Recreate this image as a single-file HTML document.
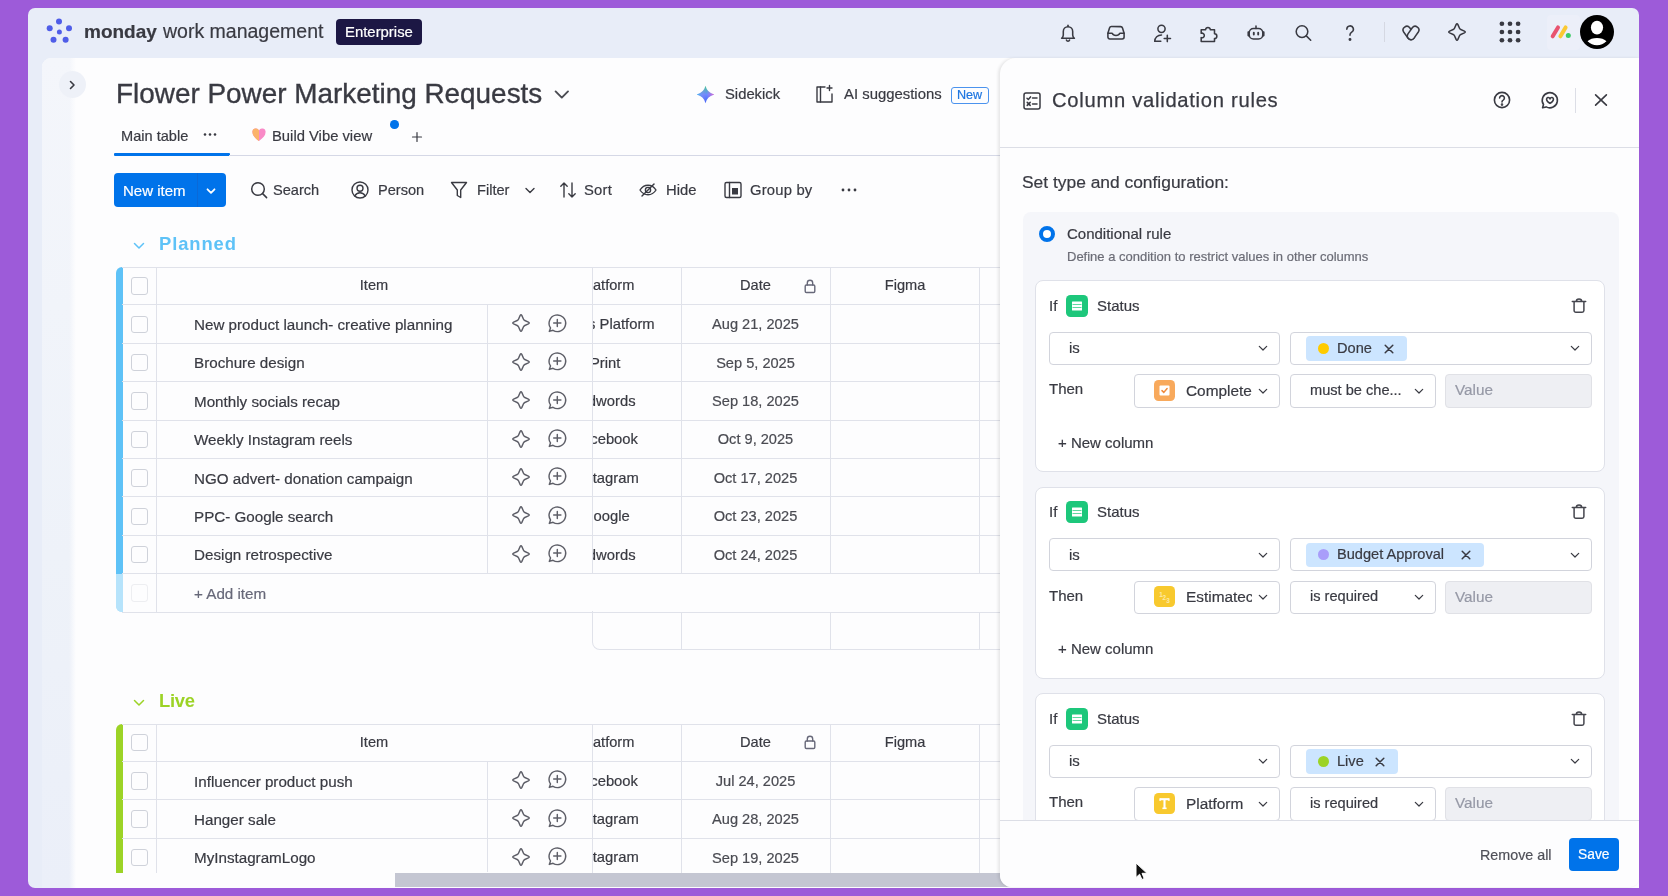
<!DOCTYPE html>
<html><head><meta charset="utf-8">
<style>
*{box-sizing:border-box;margin:0;padding:0}
html,body{width:1668px;height:896px;overflow:hidden}
body{background:#9d5bd9;font-family:"Liberation Sans",sans-serif;color:#393a42;position:relative}
.a{position:absolute}
.t{position:absolute;white-space:nowrap;line-height:1;will-change:transform;-webkit-text-stroke:.2px currentColor}
svg{position:absolute;overflow:visible}
#win{left:28px;top:8px;width:1611px;height:879.5px;border-radius:7px;background:#e8edf8;overflow:hidden}
#main{left:42px;top:57.5px;width:1597px;height:830px;background:#fdfdfe;border-top-left-radius:9px}
#strip{left:42px;top:57.5px;width:34px;height:830px;background:linear-gradient(90deg,rgba(253,253,254,0) 80%,#fdfdfe),linear-gradient(180deg,#f4f6fb,#eef2f9 60%,#ebeff9);border-top-left-radius:9px}
.ico{stroke:#393a42;fill:none;stroke-width:1.6;stroke-linecap:round;stroke-linejoin:round}
</style></head><body>
<div id="win" class="a"></div>
<div id="main" class="a"></div>
<div id="strip" class="a"></div>

<!-- HEADER -->
<svg style="left:44px;top:16px" width="30" height="30" viewBox="0 0 30 30">
  <g fill="#4f5de8">
   <circle cx="15" cy="5.4" r="3"/><circle cx="25" cy="12.2" r="3"/><circle cx="21.6" cy="23.8" r="3"/>
   <circle cx="9.5" cy="23.8" r="3"/><circle cx="5.7" cy="12.2" r="3"/><circle cx="15.4" cy="16" r="2.5"/>
  </g>
</svg>
<div class="t" style="left:84px;top:22px;font-size:19px;font-weight:bold;color:#393a42">monday</div>
<div class="t" style="left:163px;top:21.7px;font-size:19.5px;color:#393a42">work management</div>
<div class="a" style="left:336px;top:19px;width:86px;height:26px;border-radius:4px;background:#1c1744"></div>
<div class="t" style="left:345px;top:25px;font-size:14.9px;color:#fff">Enterprise</div>


<!-- header icons -->
<svg class="ico" style="left:1056.4px;top:20.5px;stroke-width:1.55" width="24" height="24" viewBox="0 0 24 24"><path d="M5.6 17.3c1.1-.8 1.7-1.9 1.7-3.3v-3.6a4.7 4.7 0 0 1 9.4 0V14c0 1.4.6 2.5 1.7 3.3z"/><path d="M12 4.2v1.3"/><path d="M10.4 19.1a1.7 1.7 0 0 0 3.2 0"/></svg>
<svg class="ico" style="left:1103.5px;top:20.5px;stroke-width:1.55" width="24" height="24" viewBox="0 0 24 24"><path d="M3.9 12.2l1.6-5.2a2 2 0 0 1 1.9-1.4h9.2a2 2 0 0 1 1.9 1.4l1.6 5.2v3.9a1.9 1.9 0 0 1-1.9 1.9H5.8a1.9 1.9 0 0 1-1.9-1.9z"/><path d="M3.9 12.2h4.3c.6 1.5 2 2.3 3.8 2.3s3.2-.8 3.8-2.3h4.3"/></svg>
<svg class="ico" style="left:1150px;top:20.5px;stroke-width:1.55" width="24" height="24" viewBox="0 0 24 24"><circle cx="11.5" cy="7.8" r="3.6"/><path d="M4.8 20.3c0-3.8 2.8-6.3 6.7-6.3"/><path d="M4.8 20.3h6"/><path d="M17.3 14.3v6.3M14.2 17.4h6.3"/></svg>
<svg class="ico" style="left:1197px;top:20.5px;stroke-width:1.55" width="24" height="24" viewBox="0 0 24 24"><path d="M4.2 8.8h4.4a2.35 2.35 0 1 1 4.7 0h4.2v4a2.35 2.35 0 1 1 0 4.7v2.9H4.2v-3.8a2.3 2.3 0 1 0 0-4.3z"/></svg>
<svg class="ico" style="left:1244px;top:20.5px;stroke-width:1.55" width="24" height="24" viewBox="0 0 24 24"><rect x="5.2" y="7.5" width="13.6" height="10.5" rx="4.3"/><path d="M12 5v2.5"/><path d="M5.2 11H4.2v3.6h1M18.8 11h1v3.6h-1"/><path d="M9.8 11.8v1.8M14.2 11.8v1.8" stroke-width="1.9"/></svg>
<svg class="ico" style="left:1290.6px;top:20.5px;stroke-width:1.55" width="24" height="24" viewBox="0 0 24 24"><circle cx="11" cy="10.6" r="5.8"/><path d="M15.3 14.9l4.4 4.4"/></svg>
<svg class="ico" style="left:1338px;top:20.5px;stroke-width:1.55" width="24" height="24" viewBox="0 0 24 24"><path d="M8.8 8.2a3.3 3.3 0 1 1 4.9 2.9c-1.1.7-1.7 1.3-1.7 2.6v.6"/><circle cx="12" cy="18.5" r=".7" fill="#393a42"/></svg>
<div class="a" style="left:1384px;top:22px;width:1px;height:20px;background:#d5d8e2"></div>
<svg class="ico" style="left:1398.6px;top:20.5px;stroke-width:1.55" width="24" height="24" viewBox="0 0 24 24"><path d="M4.68 11.03L8.98 17.13A3.7 3.7 0 0 0 15.02 12.87L10.72 6.77A3.7 3.7 0 0 0 4.68 11.03Z"/><path d="M13.28 6.77L8.98 12.87A3.7 3.7 0 0 0 15.02 17.13L19.32 11.03A3.7 3.7 0 0 0 13.28 6.77Z" fill="#e8edf8"/></svg>
<svg class="ico" style="left:1445.3px;top:20.1px;stroke-width:1.55" width="24" height="24" viewBox="0 0 24 24"><g transform="translate(2 2)"><path d="M10.9 2.6L12.5 6.2Q12.9 7.1 13.8 7.5L17.4 9.1Q19.1 10 17.4 10.9L13.8 12.5Q12.9 12.9 12.5 13.8L10.9 17.4Q10 19.1 9.1 17.4L7.5 13.8Q7.1 12.9 6.2 12.5L2.6 10.9Q.9 10 2.6 9.1L6.2 7.5Q7.1 7.1 7.5 6.2L9.1 2.6Q10 .9 10.9 2.6z"/></g></svg>
<svg style="left:1497.8px;top:20px" width="24" height="24" viewBox="0 0 24 24"><g fill="#393a42"><circle cx="3.9" cy="3.75" r="2.35"/><circle cx="12.0" cy="3.75" r="2.35"/><circle cx="20.099999999999998" cy="3.75" r="2.35"/><circle cx="3.9" cy="12.0" r="2.35"/><circle cx="12.0" cy="12.0" r="2.35"/><circle cx="20.099999999999998" cy="12.0" r="2.35"/><circle cx="3.9" cy="20.25" r="2.35"/><circle cx="12.0" cy="20.25" r="2.35"/><circle cx="20.099999999999998" cy="20.25" r="2.35"/></g></svg>
<div class="a" style="left:1546.5px;top:15px;width:33px;height:34.5px;background:#eceff9;border-radius:4px"></div>
<svg style="left:1548px;top:24px" width="24" height="16" viewBox="0 0 24 16"><path d="M4.7 12.3L10 3.4" stroke="#e8536f" stroke-width="4" stroke-linecap="round"/><path d="M12.4 12.3L17.6 3.4" stroke="#fbc933" stroke-width="4" stroke-linecap="round"/><circle cx="20.3" cy="11.5" r="2.5" fill="#3ccb64"/></svg>
<svg style="left:1580.2px;top:14.8px" width="34" height="34" viewBox="0 0 34 34"><defs><clipPath id="avc"><circle cx="17" cy="17" r="13.2"/></clipPath></defs><circle cx="17" cy="17" r="17" fill="#000"/><g clip-path="url(#avc)" fill="#fff"><ellipse cx="17" cy="12.6" rx="6.1" ry="6.8"/><ellipse cx="17" cy="34.6" rx="14" ry="11.6"/></g></svg>

<!-- BOARD HEADER -->
<div class="a" style="left:58.5px;top:71px;width:27px;height:27px;border-radius:50%;background:#eef1f8"></div>
<svg class="ico" style="left:64px;top:76.5px" width="16" height="16" viewBox="0 0 16 16" style="stroke-width:1.5"><path d="M6.5 4.5L10 8l-3.5 3.5"/></svg>
<div class="t" id="title" style="left:116px;top:79.5px;font-size:27.9px;color:#393a42;-webkit-text-stroke:0.35px #393a42">Flower Power Marketing Requests</div>
<svg class="ico" style="left:553px;top:86px;stroke-width:1.9;stroke:#4a4b52" width="18" height="16" viewBox="0 0 18 16"><path d="M2.6 5.4l6.2 6.2 6.2-6.2"/></svg>
<svg style="left:695.5px;top:85px" width="19" height="19" viewBox="0 0 19 19"><defs><linearGradient id="sk1" x1="0" y1="0" x2="0" y2="1"><stop offset="0" stop-color="#3fd08f"/><stop offset=".5" stop-color="#6a8cff"/><stop offset="1" stop-color="#3b62f6"/></linearGradient><linearGradient id="sk2" x1="0" y1="0" x2="1" y2="0"><stop offset="0" stop-color="#35c6e8" stop-opacity=".9"/><stop offset=".55" stop-color="#c56cf0" stop-opacity=".0"/><stop offset="1" stop-color="#f35fc0" stop-opacity=".9"/></linearGradient></defs><path d="M9.5 0.8Q11.2 7.8 18.2 9.5 11.2 11.2 9.5 18.2 7.8 11.2 0.8 9.5 7.8 7.8 9.5 0.8z" fill="url(#sk1)"/><path d="M9.5 0.8Q11.2 7.8 18.2 9.5 11.2 11.2 9.5 18.2 7.8 11.2 0.8 9.5 7.8 7.8 9.5 0.8z" fill="url(#sk2)"/></svg>
<div class="t" style="left:724.5px;top:87px;font-size:14.8px;color:#393a42">Sidekick</div>
<svg class="ico" style="left:814px;top:84px;stroke-width:1.4" width="20" height="20" viewBox="0 0 20 20"><path d="M11 3H3v15h15v-8"/><path d="M6.5 3v15"/><path d="M15.5 1.5v5M13 4h5"/></svg>
<div class="t" style="left:844px;top:87px;font-size:14.9px;color:#393a42">AI suggestions</div>
<div class="a" style="left:951px;top:87px;width:38px;height:17px;border:1.2px solid #4b93ee;border-radius:3px"></div>
<div class="t" style="left:957px;top:89px;font-size:12.6px;color:#1f76e0">New</div>

<!-- tabs -->
<div class="t" style="left:121px;top:128.6px;font-size:14.6px;color:#393a42">Main table</div>
<svg style="left:202px;top:130px" width="16" height="10" viewBox="0 0 16 10"><g fill="#393a42"><circle cx="3" cy="4.5" r="1.3"/><circle cx="8" cy="4.5" r="1.3"/><circle cx="13" cy="4.5" r="1.3"/></g></svg>
<div class="a" style="left:113.5px;top:153px;width:116px;height:2.5px;background:#0073ea;border-radius:1px"></div>
<div class="a" style="left:229px;top:154.6px;width:771px;height:1px;background:#d5d8e6"></div>
<svg style="left:251px;top:127px" width="16" height="15" viewBox="0 0 16 15"><path d="M8 14C4 11 1.5 8.5 1.5 5.5A3.4 3.4 0 0 1 8 3.6 3.4 3.4 0 0 1 14.5 5.5C14.5 8.5 12 11 8 14z" fill="#f98ac7"/><path d="M8 14C4 11 1.5 8.5 1.5 5.5A3.4 3.4 0 0 1 8 3.6z" fill="#fbb36b"/></svg>
<div class="t" style="left:271.5px;top:128.6px;font-size:14.8px;color:#393a42">Build Vibe view</div>
<div class="a" style="left:390px;top:120px;width:8.5px;height:8.5px;border-radius:50%;background:#0073ea"></div>
<svg class="ico" style="left:409.5px;top:130px;stroke-width:1.2" width="14" height="14" viewBox="0 0 14 14"><path d="M7 2.5v9M2.5 7h9"/></svg>

<!-- toolbar -->
<div class="a" style="left:114px;top:173px;width:111.5px;height:34px;border-radius:4px;background:#0073ea"></div>
<div class="a" style="left:196.5px;top:173px;width:1px;height:34px;background:#0a69d8"></div>
<div class="t" style="left:122.5px;top:183px;font-size:15px;color:#fff">New item</div>
<svg style="left:203px;top:183px;stroke:#fff;fill:none;stroke-width:1.8;stroke-linecap:round;stroke-linejoin:round" width="16" height="16" viewBox="0 0 16 16"><path d="M4.5 6.3L8 9.8l3.5-3.5"/></svg>
<svg class="ico" style="left:249px;top:180px;stroke-width:1.5" width="20" height="20" viewBox="0 0 20 20"><circle cx="9" cy="9" r="6.3"/><path d="M13.6 13.6l4 4"/></svg>
<div class="t" style="left:273px;top:183px;font-size:14.6px;color:#393a42">Search</div>
<svg class="ico" style="left:350px;top:180px;stroke-width:1.4" width="20" height="20" viewBox="0 0 20 20"><circle cx="10" cy="10" r="8"/><circle cx="10" cy="8.3" r="3"/><path d="M4.8 16c1.2-2.3 3-3.3 5.2-3.3s4 1 5.2 3.3"/></svg>
<div class="t" style="left:377.5px;top:183px;font-size:14.6px;color:#393a42">Person</div>
<svg class="ico" style="left:449px;top:180px;stroke-width:1.4" width="20" height="20" viewBox="0 0 20 20"><path d="M2.5 2.5h15l-5.8 7.5v7.5l-3.4-2V10z"/></svg>
<div class="t" style="left:476.5px;top:183px;font-size:14.6px;color:#393a42">Filter</div>
<svg class="ico" style="left:522px;top:182px;stroke-width:1.4" width="16" height="16" viewBox="0 0 16 16"><path d="M4 6.5l4 4 4-4"/></svg>
<svg class="ico" style="left:557.5px;top:180px;stroke-width:1.4" width="20" height="20" viewBox="0 0 20 20"><path d="M6 17V3M2.8 6.2L6 3l3.2 3.2M14 3v14M10.8 13.8L14 17l3.2-3.2"/></svg>
<div class="t" style="left:583.8px;top:183px;font-size:14.8px;letter-spacing:.2px;color:#393a42">Sort</div>
<svg class="ico" style="left:638px;top:180px;stroke-width:1.4" width="20" height="20" viewBox="0 0 20 20"><path d="M2 10c2-3.2 4.8-4.8 8-4.8s6 1.6 8 4.8c-2 3.2-4.8 4.8-8 4.8S4 13.2 2 10z"/><circle cx="10" cy="10" r="2.6"/><path d="M4 16L16 4"/></svg>
<div class="t" style="left:665.6px;top:183px;font-size:14.8px;color:#393a42">Hide</div>
<svg class="ico" style="left:722.5px;top:180px;stroke-width:1.4" width="20" height="20" viewBox="0 0 20 20"><rect x="2" y="2.5" width="16" height="15" rx="1.5"/><path d="M6.5 2.5v15"/><rect x="9" y="8" width="6" height="6.5" fill="#393a42" stroke="none"/></svg>
<div class="t" style="left:750px;top:183px;font-size:14.8px;letter-spacing:.2px;color:#393a42">Group by</div>
<svg style="left:840px;top:185px" width="18" height="10" viewBox="0 0 18 10"><g fill="#393a42"><circle cx="3" cy="5" r="1.4"/><circle cx="9" cy="5" r="1.4"/><circle cx="15" cy="5" r="1.4"/></g></svg>

<!-- TABLES -->
<svg style="left:130.5px;top:237.9px;stroke:#5ec2f7;fill:none;stroke-width:1.5;stroke-linecap:round;stroke-linejoin:round" width="16" height="16" viewBox="0 0 16 16"><path d="M3.5 5.5l4.5 4.5 4.5-4.5"/></svg>
<div class="t" style="left:159px;top:234.7px;font-size:18.4px;font-weight:bold;color:#5ec2f7;letter-spacing:0.9px;-webkit-text-stroke:0">Planned</div>
<div class="a" style="left:116px;top:267px;width:6.5px;height:345.0px;background:#5ec2f7;border-radius:6px 0 0 6px"></div>
<div class="a" style="left:116px;top:573.6px;width:6.5px;height:38.4px;background:#fff;opacity:.55;border-radius:0 0 0 6px"></div>
<div class="a" style="left:122px;top:267px;width:878px;height:1px;background:#e0e2ea"></div>
<div class="a" style="left:122px;top:304.3px;width:878px;height:1.2px;background:#e0e2ea"></div>
<div class="a" style="left:122px;top:342.7px;width:878px;height:1.2px;background:#e0e2ea"></div>
<div class="a" style="left:122px;top:381.1px;width:878px;height:1.2px;background:#e0e2ea"></div>
<div class="a" style="left:122px;top:419.5px;width:878px;height:1.2px;background:#e0e2ea"></div>
<div class="a" style="left:122px;top:457.9px;width:878px;height:1.2px;background:#e0e2ea"></div>
<div class="a" style="left:122px;top:496.3px;width:878px;height:1.2px;background:#e0e2ea"></div>
<div class="a" style="left:122px;top:534.7px;width:878px;height:1.2px;background:#e0e2ea"></div>
<div class="a" style="left:122px;top:573.1px;width:878px;height:1.2px;background:#e0e2ea"></div>
<div class="a" style="left:122px;top:611.5px;width:878px;height:1.2px;background:#e0e2ea"></div>
<div class="a" style="left:156px;top:267px;width:1px;height:345.0px;background:#e0e2ea"></div>
<div class="a" style="left:487px;top:304.8px;width:1px;height:268.8px;background:#e0e2ea"></div>
<div class="a" style="left:592px;top:267px;width:1px;height:306.6px;background:#e0e2ea"></div>
<div class="a" style="left:680.5px;top:267px;width:1px;height:306.6px;background:#e0e2ea"></div>
<div class="a" style="left:830px;top:267px;width:1px;height:306.6px;background:#e0e2ea"></div>
<div class="a" style="left:979px;top:267px;width:1px;height:306.6px;background:#e0e2ea"></div>
<div class="a" style="left:130.5px;top:277.4px;width:17.5px;height:17.5px;border:1px solid #cfd2da;border-radius:3px;"></div>
<div class="t" style="left:156px;width:436px;text-align:center;top:278.4px;font-size:14.6px;color:#393a42">Item</div>
<div class="a" style="left:592.5px;top:268px;width:88px;height:36px;overflow:hidden"><div class="t" style="right:46.5px;top:10.399999999999977px;font-size:14.6px;color:#393a42">Platform</div></div>
<div class="t" style="left:681px;width:149px;text-align:center;top:278.4px;font-size:14.6px;color:#393a42">Date</div>
<svg class="ico" style="left:801.5px;top:277.9px;stroke:#676879;stroke-width:1.4" width="16" height="16" viewBox="0 0 16 16"><rect x="3.2" y="7" width="9.6" height="7.5" rx="1.2"/><path d="M5.3 7V5a2.7 2.7 0 0 1 5.4 0v2"/></svg>
<div class="t" style="left:830px;width:150px;text-align:center;top:278.4px;font-size:14.6px;color:#393a42">Figma</div>
<div class="a" style="left:130.5px;top:315.5px;width:17.5px;height:17.5px;border:1px solid #cfd2da;border-radius:3px;"></div>
<div class="t" style="left:194px;top:317.0px;font-size:15.2px;color:#393a42">New product launch- creative planning</div>
<svg class="ico" style="left:510.6px;top:313.3px;stroke:#5e5f68;stroke-width:1.45" width="20" height="20" viewBox="0 0 20 20"><path d="M10.9 2.6L12.5 6.2Q12.9 7.1 13.8 7.5L17.4 9.1Q19.1 10 17.4 10.9L13.8 12.5Q12.9 12.9 12.5 13.8L10.9 17.4Q10 19.1 9.1 17.4L7.5 13.8Q7.1 12.9 6.2 12.5L2.6 10.9Q.9 10 2.6 9.1L6.2 7.5Q7.1 7.1 7.5 6.2L9.1 2.6Q10 .9 10.9 2.6z"/></svg>
<svg class="ico" style="left:547px;top:312.7px;stroke:#5e5f68;stroke-width:1.45" width="20" height="20" viewBox="0 0 20 20"><path d="M2.3 18.4l1.2-3.5A8.3 8.3 0 1 1 6 17.3z"/><path d="M10.3 6.4v7.2M6.7 10h7.2"/></svg>
<div class="a" style="left:592.5px;top:305.8px;width:88px;height:36px;overflow:hidden"><div class="t" style="right:26px;top:11.399999999999977px;font-size:14.8px;color:#393a42">Ads Platform</div></div>
<div class="t" style="left:681px;width:149px;text-align:center;top:317.2px;font-size:14.6px;color:#4a4b52">Aug 21, 2025</div>
<div class="a" style="left:130.5px;top:353.9px;width:17.5px;height:17.5px;border:1px solid #cfd2da;border-radius:3px;"></div>
<div class="t" style="left:194px;top:355.4px;font-size:15.2px;color:#393a42">Brochure design</div>
<svg class="ico" style="left:510.6px;top:351.7px;stroke:#5e5f68;stroke-width:1.45" width="20" height="20" viewBox="0 0 20 20"><path d="M10.9 2.6L12.5 6.2Q12.9 7.1 13.8 7.5L17.4 9.1Q19.1 10 17.4 10.9L13.8 12.5Q12.9 12.9 12.5 13.8L10.9 17.4Q10 19.1 9.1 17.4L7.5 13.8Q7.1 12.9 6.2 12.5L2.6 10.9Q.9 10 2.6 9.1L6.2 7.5Q7.1 7.1 7.5 6.2L9.1 2.6Q10 .9 10.9 2.6z"/></svg>
<svg class="ico" style="left:547px;top:351.09999999999997px;stroke:#5e5f68;stroke-width:1.45" width="20" height="20" viewBox="0 0 20 20"><path d="M2.3 18.4l1.2-3.5A8.3 8.3 0 1 1 6 17.3z"/><path d="M10.3 6.4v7.2M6.7 10h7.2"/></svg>
<div class="a" style="left:592.5px;top:344.2px;width:88px;height:36px;overflow:hidden"><div class="t" style="right:60px;top:11.399999999999977px;font-size:14.8px;color:#393a42">Print</div></div>
<div class="t" style="left:681px;width:149px;text-align:center;top:355.59999999999997px;font-size:14.6px;color:#4a4b52">Sep 5, 2025</div>
<div class="a" style="left:130.5px;top:392.3px;width:17.5px;height:17.5px;border:1px solid #cfd2da;border-radius:3px;"></div>
<div class="t" style="left:194px;top:393.8px;font-size:15.2px;color:#393a42">Monthly socials recap</div>
<svg class="ico" style="left:510.6px;top:390.1px;stroke:#5e5f68;stroke-width:1.45" width="20" height="20" viewBox="0 0 20 20"><path d="M10.9 2.6L12.5 6.2Q12.9 7.1 13.8 7.5L17.4 9.1Q19.1 10 17.4 10.9L13.8 12.5Q12.9 12.9 12.5 13.8L10.9 17.4Q10 19.1 9.1 17.4L7.5 13.8Q7.1 12.9 6.2 12.5L2.6 10.9Q.9 10 2.6 9.1L6.2 7.5Q7.1 7.1 7.5 6.2L9.1 2.6Q10 .9 10.9 2.6z"/></svg>
<svg class="ico" style="left:547px;top:389.5px;stroke:#5e5f68;stroke-width:1.45" width="20" height="20" viewBox="0 0 20 20"><path d="M2.3 18.4l1.2-3.5A8.3 8.3 0 1 1 6 17.3z"/><path d="M10.3 6.4v7.2M6.7 10h7.2"/></svg>
<div class="a" style="left:592.5px;top:382.6px;width:88px;height:36px;overflow:hidden"><div class="t" style="right:45px;top:11.399999999999977px;font-size:14.8px;color:#393a42">Adwords</div></div>
<div class="t" style="left:681px;width:149px;text-align:center;top:394.0px;font-size:14.6px;color:#4a4b52">Sep 18, 2025</div>
<div class="a" style="left:130.5px;top:430.7px;width:17.5px;height:17.5px;border:1px solid #cfd2da;border-radius:3px;"></div>
<div class="t" style="left:194px;top:432.2px;font-size:15.2px;color:#393a42">Weekly Instagram reels</div>
<svg class="ico" style="left:510.6px;top:428.5px;stroke:#5e5f68;stroke-width:1.45" width="20" height="20" viewBox="0 0 20 20"><path d="M10.9 2.6L12.5 6.2Q12.9 7.1 13.8 7.5L17.4 9.1Q19.1 10 17.4 10.9L13.8 12.5Q12.9 12.9 12.5 13.8L10.9 17.4Q10 19.1 9.1 17.4L7.5 13.8Q7.1 12.9 6.2 12.5L2.6 10.9Q.9 10 2.6 9.1L6.2 7.5Q7.1 7.1 7.5 6.2L9.1 2.6Q10 .9 10.9 2.6z"/></svg>
<svg class="ico" style="left:547px;top:427.9px;stroke:#5e5f68;stroke-width:1.45" width="20" height="20" viewBox="0 0 20 20"><path d="M2.3 18.4l1.2-3.5A8.3 8.3 0 1 1 6 17.3z"/><path d="M10.3 6.4v7.2M6.7 10h7.2"/></svg>
<div class="a" style="left:592.5px;top:421.0px;width:88px;height:36px;overflow:hidden"><div class="t" style="right:42.5px;top:11.399999999999977px;font-size:14.8px;color:#393a42">Facebook</div></div>
<div class="t" style="left:681px;width:149px;text-align:center;top:432.4px;font-size:14.6px;color:#4a4b52">Oct 9, 2025</div>
<div class="a" style="left:130.5px;top:469.09999999999997px;width:17.5px;height:17.5px;border:1px solid #cfd2da;border-radius:3px;"></div>
<div class="t" style="left:194px;top:470.59999999999997px;font-size:15.2px;color:#393a42">NGO advert- donation campaign</div>
<svg class="ico" style="left:510.6px;top:466.9px;stroke:#5e5f68;stroke-width:1.45" width="20" height="20" viewBox="0 0 20 20"><path d="M10.9 2.6L12.5 6.2Q12.9 7.1 13.8 7.5L17.4 9.1Q19.1 10 17.4 10.9L13.8 12.5Q12.9 12.9 12.5 13.8L10.9 17.4Q10 19.1 9.1 17.4L7.5 13.8Q7.1 12.9 6.2 12.5L2.6 10.9Q.9 10 2.6 9.1L6.2 7.5Q7.1 7.1 7.5 6.2L9.1 2.6Q10 .9 10.9 2.6z"/></svg>
<svg class="ico" style="left:547px;top:466.29999999999995px;stroke:#5e5f68;stroke-width:1.45" width="20" height="20" viewBox="0 0 20 20"><path d="M2.3 18.4l1.2-3.5A8.3 8.3 0 1 1 6 17.3z"/><path d="M10.3 6.4v7.2M6.7 10h7.2"/></svg>
<div class="a" style="left:592.5px;top:459.4px;width:88px;height:36px;overflow:hidden"><div class="t" style="right:42px;top:11.399999999999977px;font-size:14.8px;color:#393a42">Instagram</div></div>
<div class="t" style="left:681px;width:149px;text-align:center;top:470.79999999999995px;font-size:14.6px;color:#4a4b52">Oct 17, 2025</div>
<div class="a" style="left:130.5px;top:507.5px;width:17.5px;height:17.5px;border:1px solid #cfd2da;border-radius:3px;"></div>
<div class="t" style="left:194px;top:509.0px;font-size:15.2px;color:#393a42">PPC- Google search</div>
<svg class="ico" style="left:510.6px;top:505.29999999999995px;stroke:#5e5f68;stroke-width:1.45" width="20" height="20" viewBox="0 0 20 20"><path d="M10.9 2.6L12.5 6.2Q12.9 7.1 13.8 7.5L17.4 9.1Q19.1 10 17.4 10.9L13.8 12.5Q12.9 12.9 12.5 13.8L10.9 17.4Q10 19.1 9.1 17.4L7.5 13.8Q7.1 12.9 6.2 12.5L2.6 10.9Q.9 10 2.6 9.1L6.2 7.5Q7.1 7.1 7.5 6.2L9.1 2.6Q10 .9 10.9 2.6z"/></svg>
<svg class="ico" style="left:547px;top:504.70000000000005px;stroke:#5e5f68;stroke-width:1.45" width="20" height="20" viewBox="0 0 20 20"><path d="M2.3 18.4l1.2-3.5A8.3 8.3 0 1 1 6 17.3z"/><path d="M10.3 6.4v7.2M6.7 10h7.2"/></svg>
<div class="a" style="left:592.5px;top:497.8px;width:88px;height:36px;overflow:hidden"><div class="t" style="right:51px;top:11.399999999999977px;font-size:14.8px;color:#393a42">Google</div></div>
<div class="t" style="left:681px;width:149px;text-align:center;top:509.2px;font-size:14.6px;color:#4a4b52">Oct 23, 2025</div>
<div class="a" style="left:130.5px;top:545.9000000000001px;width:17.5px;height:17.5px;border:1px solid #cfd2da;border-radius:3px;"></div>
<div class="t" style="left:194px;top:547.4000000000001px;font-size:15.2px;color:#393a42">Design retrospective</div>
<svg class="ico" style="left:510.6px;top:543.7px;stroke:#5e5f68;stroke-width:1.45" width="20" height="20" viewBox="0 0 20 20"><path d="M10.9 2.6L12.5 6.2Q12.9 7.1 13.8 7.5L17.4 9.1Q19.1 10 17.4 10.9L13.8 12.5Q12.9 12.9 12.5 13.8L10.9 17.4Q10 19.1 9.1 17.4L7.5 13.8Q7.1 12.9 6.2 12.5L2.6 10.9Q.9 10 2.6 9.1L6.2 7.5Q7.1 7.1 7.5 6.2L9.1 2.6Q10 .9 10.9 2.6z"/></svg>
<svg class="ico" style="left:547px;top:543.1000000000001px;stroke:#5e5f68;stroke-width:1.45" width="20" height="20" viewBox="0 0 20 20"><path d="M2.3 18.4l1.2-3.5A8.3 8.3 0 1 1 6 17.3z"/><path d="M10.3 6.4v7.2M6.7 10h7.2"/></svg>
<div class="a" style="left:592.5px;top:536.2px;width:88px;height:36px;overflow:hidden"><div class="t" style="right:45px;top:11.400000000000091px;font-size:14.8px;color:#393a42">Adwords</div></div>
<div class="t" style="left:681px;width:149px;text-align:center;top:547.6000000000001px;font-size:14.6px;color:#4a4b52">Oct 24, 2025</div>
<div class="a" style="left:130.5px;top:584.3000000000001px;width:17.5px;height:17.5px;border:1px solid #cfd2da;border-radius:3px;opacity:.35;"></div>
<div class="t" style="left:193.5px;top:585.8000000000001px;font-size:15.2px;color:#676879">+ Add item</div>
<div class="a" style="left:592px;top:611.0px;width:420px;height:39.4px;border:1px solid #e0e2ea;border-top:none;border-radius:0 0 0 8px"></div>
<div class="a" style="left:680.5px;top:612.0px;width:1px;height:38.4px;background:#e0e2ea"></div>
<div class="a" style="left:830px;top:612.0px;width:1px;height:38.4px;background:#e0e2ea"></div>
<div class="a" style="left:979px;top:612.0px;width:1px;height:38.4px;background:#e0e2ea"></div>
<svg style="left:130.5px;top:694.9px;stroke:#9cd326;fill:none;stroke-width:1.5;stroke-linecap:round;stroke-linejoin:round" width="16" height="16" viewBox="0 0 16 16"><path d="M3.5 5.5l4.5 4.5 4.5-4.5"/></svg>
<div class="t" style="left:159px;top:691.7px;font-size:18.4px;font-weight:bold;color:#9cd326;letter-spacing:-0.3px;-webkit-text-stroke:0">Live</div>
<div class="a" style="left:116px;top:723.5px;width:6.5px;height:149.0px;background:#9cd326;border-radius:6px 0 0 0"></div>
<div class="a" style="left:122px;top:723.5px;width:878px;height:1px;background:#e0e2ea"></div>
<div class="a" style="left:122px;top:760.8px;width:878px;height:1.2px;background:#e0e2ea"></div>
<div class="a" style="left:122px;top:799.1999999999999px;width:878px;height:1.2px;background:#e0e2ea"></div>
<div class="a" style="left:122px;top:837.5999999999999px;width:878px;height:1.2px;background:#e0e2ea"></div>
<div class="a" style="left:156px;top:723.5px;width:1px;height:149.0px;background:#e0e2ea"></div>
<div class="a" style="left:487px;top:761.3px;width:1px;height:111.20000000000005px;background:#e0e2ea"></div>
<div class="a" style="left:592px;top:723.5px;width:1px;height:149.0px;background:#e0e2ea"></div>
<div class="a" style="left:680.5px;top:723.5px;width:1px;height:149.0px;background:#e0e2ea"></div>
<div class="a" style="left:830px;top:723.5px;width:1px;height:149.0px;background:#e0e2ea"></div>
<div class="a" style="left:979px;top:723.5px;width:1px;height:149.0px;background:#e0e2ea"></div>
<div class="a" style="left:130.5px;top:733.9px;width:17.5px;height:17.5px;border:1px solid #cfd2da;border-radius:3px;"></div>
<div class="t" style="left:156px;width:436px;text-align:center;top:734.9px;font-size:14.6px;color:#393a42">Item</div>
<div class="a" style="left:592.5px;top:724.5px;width:88px;height:36px;overflow:hidden"><div class="t" style="right:46.5px;top:10.399999999999977px;font-size:14.6px;color:#393a42">Platform</div></div>
<div class="t" style="left:681px;width:149px;text-align:center;top:734.9px;font-size:14.6px;color:#393a42">Date</div>
<svg class="ico" style="left:801.5px;top:734.4px;stroke:#676879;stroke-width:1.4" width="16" height="16" viewBox="0 0 16 16"><rect x="3.2" y="7" width="9.6" height="7.5" rx="1.2"/><path d="M5.3 7V5a2.7 2.7 0 0 1 5.4 0v2"/></svg>
<div class="t" style="left:830px;width:150px;text-align:center;top:734.9px;font-size:14.6px;color:#393a42">Figma</div>
<div class="a" style="left:130.5px;top:772.0px;width:17.5px;height:17.5px;border:1px solid #cfd2da;border-radius:3px;"></div>
<div class="t" style="left:194px;top:773.5px;font-size:15.2px;color:#393a42">Influencer product push</div>
<svg class="ico" style="left:510.6px;top:769.8px;stroke:#5e5f68;stroke-width:1.45" width="20" height="20" viewBox="0 0 20 20"><path d="M10.9 2.6L12.5 6.2Q12.9 7.1 13.8 7.5L17.4 9.1Q19.1 10 17.4 10.9L13.8 12.5Q12.9 12.9 12.5 13.8L10.9 17.4Q10 19.1 9.1 17.4L7.5 13.8Q7.1 12.9 6.2 12.5L2.6 10.9Q.9 10 2.6 9.1L6.2 7.5Q7.1 7.1 7.5 6.2L9.1 2.6Q10 .9 10.9 2.6z"/></svg>
<svg class="ico" style="left:547px;top:769.2px;stroke:#5e5f68;stroke-width:1.45" width="20" height="20" viewBox="0 0 20 20"><path d="M2.3 18.4l1.2-3.5A8.3 8.3 0 1 1 6 17.3z"/><path d="M10.3 6.4v7.2M6.7 10h7.2"/></svg>
<div class="a" style="left:592.5px;top:762.3px;width:88px;height:36px;overflow:hidden"><div class="t" style="right:42.5px;top:11.400000000000091px;font-size:14.8px;color:#393a42">Facebook</div></div>
<div class="t" style="left:681px;width:149px;text-align:center;top:773.7px;font-size:14.6px;color:#4a4b52">Jul 24, 2025</div>
<div class="a" style="left:130.5px;top:810.4px;width:17.5px;height:17.5px;border:1px solid #cfd2da;border-radius:3px;"></div>
<div class="t" style="left:194px;top:811.9px;font-size:15.2px;color:#393a42">Hanger sale</div>
<svg class="ico" style="left:510.6px;top:808.1999999999999px;stroke:#5e5f68;stroke-width:1.45" width="20" height="20" viewBox="0 0 20 20"><path d="M10.9 2.6L12.5 6.2Q12.9 7.1 13.8 7.5L17.4 9.1Q19.1 10 17.4 10.9L13.8 12.5Q12.9 12.9 12.5 13.8L10.9 17.4Q10 19.1 9.1 17.4L7.5 13.8Q7.1 12.9 6.2 12.5L2.6 10.9Q.9 10 2.6 9.1L6.2 7.5Q7.1 7.1 7.5 6.2L9.1 2.6Q10 .9 10.9 2.6z"/></svg>
<svg class="ico" style="left:547px;top:807.6px;stroke:#5e5f68;stroke-width:1.45" width="20" height="20" viewBox="0 0 20 20"><path d="M2.3 18.4l1.2-3.5A8.3 8.3 0 1 1 6 17.3z"/><path d="M10.3 6.4v7.2M6.7 10h7.2"/></svg>
<div class="a" style="left:592.5px;top:800.6999999999999px;width:88px;height:36px;overflow:hidden"><div class="t" style="right:42px;top:11.400000000000091px;font-size:14.8px;color:#393a42">Instagram</div></div>
<div class="t" style="left:681px;width:149px;text-align:center;top:812.1px;font-size:14.6px;color:#4a4b52">Aug 28, 2025</div>
<div class="a" style="left:130.5px;top:848.8px;width:17.5px;height:17.5px;border:1px solid #cfd2da;border-radius:3px;"></div>
<div class="t" style="left:194px;top:850.3px;font-size:15.2px;color:#393a42">MyInstagramLogo</div>
<svg class="ico" style="left:510.6px;top:846.5999999999999px;stroke:#5e5f68;stroke-width:1.45" width="20" height="20" viewBox="0 0 20 20"><path d="M10.9 2.6L12.5 6.2Q12.9 7.1 13.8 7.5L17.4 9.1Q19.1 10 17.4 10.9L13.8 12.5Q12.9 12.9 12.5 13.8L10.9 17.4Q10 19.1 9.1 17.4L7.5 13.8Q7.1 12.9 6.2 12.5L2.6 10.9Q.9 10 2.6 9.1L6.2 7.5Q7.1 7.1 7.5 6.2L9.1 2.6Q10 .9 10.9 2.6z"/></svg>
<svg class="ico" style="left:547px;top:846.0px;stroke:#5e5f68;stroke-width:1.45" width="20" height="20" viewBox="0 0 20 20"><path d="M2.3 18.4l1.2-3.5A8.3 8.3 0 1 1 6 17.3z"/><path d="M10.3 6.4v7.2M6.7 10h7.2"/></svg>
<div class="a" style="left:592.5px;top:839.0999999999999px;width:88px;height:36px;overflow:hidden"><div class="t" style="right:42px;top:11.400000000000091px;font-size:14.8px;color:#393a42">Instagram</div></div>
<div class="t" style="left:681px;width:149px;text-align:center;top:850.5px;font-size:14.6px;color:#4a4b52">Sep 19, 2025</div>
<div class="a" style="left:395px;top:872.5px;width:620px;height:14.5px;background:#c4c6d2"></div>
<!-- /TABLES -->

<!-- PANEL -->
<div class="a" style="left:1000px;top:57.5px;width:639px;height:829.5px;background:#fdfdfe;border-radius:16px 0 9px 12px;box-shadow:-1.5px 0 3px rgba(0,0,0,.09)"></div>
<div class="a" style="left:1000px;top:147px;width:639px;height:1.2px;background:#dcdee6"></div>
<svg class="ico" style="left:1023px;top:91.5px;stroke-width:1.5" width="18" height="18" viewBox="0 0 18 18"><rect x="1" y="1" width="16" height="16" rx="2"/><path d="M4 6.3l1.3 1.2 2.2-2.6M9.5 6h4.5M4.2 10.4l3 3M7.2 10.4l-3 3M9.5 12h4.5"/></svg>
<div class="t" style="left:1051.5px;top:89.5px;font-size:20.2px;letter-spacing:.72px;color:#393a42;-webkit-text-stroke:.25px #393a42">Column validation rules</div>
<svg class="ico" style="left:1492.4px;top:90.4px;stroke-width:1.6" width="20" height="20" viewBox="0 0 20 20"><circle cx="10" cy="10" r="7.6"/><path d="M7.6 8a2.4 2.4 0 1 1 3.6 2.1c-.8.4-1.2.9-1.2 1.8"/><circle cx="10" cy="14.6" r=".5" fill="#393a42"/></svg>
<svg class="ico" style="left:1538.5px;top:89.8px;stroke-width:1.6" width="20" height="20" viewBox="0 0 20 20"><path d="M3.6 17.8l.9-3.3A7.6 7.6 0 1 1 7.1 16.9z"/><path d="M11 13.4c-2.1-1.4-3.4-2.6-3.4-4a1.7 1.7 0 0 1 3.4-.5 1.7 1.7 0 0 1 3.4.5c0 1.4-1.3 2.6-3.4 4z"/></svg>
<div class="a" style="left:1575px;top:88px;width:1px;height:25px;background:#dcdee6"></div>
<svg class="ico" style="left:1593px;top:92.4px;stroke-width:1.6" width="16" height="16" viewBox="0 0 16 16"><path d="M2.6 2.8l10.8 10.4M13.4 2.8L2.6 13.2"/></svg>
<div class="t" style="left:1022px;top:173.8px;font-size:17.4px;color:#393a42;">Set type and configuration:</div>
<div class="a" style="left:1022.5px;top:211.5px;width:596px;height:640px;background:#f5f6fa;border-radius:8px"></div>
<div class="a" style="left:1038.8px;top:225.6px;width:16px;height:16px;border-radius:50%;border:4.6px solid #0073ea;background:#fff"></div>
<div class="t" style="left:1066.5px;top:226.1px;font-size:15px;color:#393a42;">Conditional rule</div>
<div class="t" style="left:1066.5px;top:250.4px;font-size:13px;color:#6b6c76;">Define a condition to restrict values in other columns</div>
<div class="a" style="left:1034.5px;top:280px;width:570.5px;height:192px;background:#fff;border:1px solid #dfe1e9;border-radius:8px"></div>
<div class="t" style="left:1048.5px;top:297.6px;font-size:15px;color:#393a42;">If</div>
<svg style="left:1066px;top:294.5px" width="22" height="22" viewBox="0 0 22 22"><rect x="0" y="0" width="22" height="22" rx="4.5" fill="#1dc77b"/><rect x="6" y="6.5" width="10" height="9" fill="#fff" rx=".5"/><path d="M6.5 9.5h9M6.5 12.5h9" stroke="#5fd9a0" stroke-width="1"/></svg>
<div class="t" style="left:1096.5px;top:297.6px;font-size:15px;color:#393a42;">Status</div>
<svg class="ico" style="left:1570px;top:296.5px;stroke-width:1.5;stroke:#45464e" width="18" height="18" viewBox="0 0 18 18"><path d="M2.3 4.4h13.4M6.3 4.4a2.7 2.5 0 0 1 5.4 0M4.1 4.4v9.2a1.7 1.7 0 0 0 1.7 1.7h6.4a1.7 1.7 0 0 0 1.7-1.7V4.4"/></svg>
<div class="a" style="left:1048.5px;top:331.5px;width:231.5px;height:33.0px;background:#fff;border:1px solid #d2d4dc;border-radius:4px"></div>
<div class="t" style="left:1069px;top:340.1px;font-size:15px;color:#393a42;">is</div>
<svg class="ico" style="left:1255px;top:340px;stroke:#393a42;stroke-width:1.2" width="16" height="16" viewBox="0 0 16 16"><path d="M4.3 6.3L8 10l3.7-3.7"/></svg>
<div class="a" style="left:1289.5px;top:331.5px;width:302.0px;height:33.0px;background:#fff;border:1px solid #d2d4dc;border-radius:4px"></div>
<div class="a" style="left:1305.5px;top:336px;width:101.5px;height:24.5px;background:#cce5ff;border-radius:4px"></div>
<div class="a" style="left:1318px;top:342.5px;width:11px;height:11px;border-radius:50%;background:#ffcb00"></div>
<div class="t" style="left:1337px;top:340.8px;font-size:14.6px;color:#393a42;">Done</div>
<svg class="ico" style="left:1383px;top:342.5px;stroke-width:1.5" width="12" height="12" viewBox="0 0 12 12"><path d="M2.2 2.2l7.6 7.6M9.8 2.2l-7.6 7.6"/></svg>
<svg class="ico" style="left:1566.8px;top:340px;stroke:#393a42;stroke-width:1.2" width="16" height="16" viewBox="0 0 16 16"><path d="M4.3 6.3L8 10l3.7-3.7"/></svg>
<div class="t" style="left:1049px;top:381.1px;font-size:15px;color:#393a42;">Then</div>
<div class="a" style="left:1134px;top:374px;width:146px;height:33.5px;background:#fff;border:1px solid #d2d4dc;border-radius:4px"></div>
<svg style="left:1154px;top:379.8px" width="21" height="21" viewBox="0 0 21 21"><rect width="21" height="21" rx="4.5" fill="#f8a95c"/><rect x="5.5" y="5.5" width="10" height="10" rx="1" fill="#fff"/><path d="M8 10.6l1.8 1.8 3.3-3.8" stroke="#f08a3c" stroke-width="1.5" fill="none" stroke-linecap="round"/></svg>
<div class="a" style="left:1185.5px;top:380px;width:66px;height:22px;overflow:hidden"><div class="t" style="left:0;top:2.6px;font-size:15.4px;color:#393a42">Complete</div></div>
<svg class="ico" style="left:1255px;top:382.5px;stroke:#393a42;stroke-width:1.2" width="16" height="16" viewBox="0 0 16 16"><path d="M4.3 6.3L8 10l3.7-3.7"/></svg>
<div class="a" style="left:1289.5px;top:374px;width:146.5px;height:33.5px;background:#fff;border:1px solid #d2d4dc;border-radius:4px"></div>
<div class="t" style="left:1309.5px;top:382.8px;font-size:14.6px;color:#393a42;">must be che...</div>
<svg class="ico" style="left:1411px;top:382.5px;stroke:#393a42;stroke-width:1.2" width="16" height="16" viewBox="0 0 16 16"><path d="M4.3 6.3L8 10l3.7-3.7"/></svg>
<div class="a" style="left:1444.5px;top:374px;width:147.0px;height:33.5px;background:#eeeff3;border:1px solid #e0e1e6;border-radius:4px"></div>
<div class="t" style="left:1455px;top:382.4px;font-size:15.3px;color:#9699a6;">Value</div>
<div class="t" style="left:1057.5px;top:434.6px;font-size:15px;color:#393a42;">+ New column</div>
<div class="a" style="left:1034.5px;top:486.5px;width:570.5px;height:192.0px;background:#fff;border:1px solid #dfe1e9;border-radius:8px"></div>
<div class="t" style="left:1048.5px;top:504.1px;font-size:15px;color:#393a42;">If</div>
<svg style="left:1066px;top:501.0px" width="22" height="22" viewBox="0 0 22 22"><rect x="0" y="0" width="22" height="22" rx="4.5" fill="#1dc77b"/><rect x="6" y="6.5" width="10" height="9" fill="#fff" rx=".5"/><path d="M6.5 9.5h9M6.5 12.5h9" stroke="#5fd9a0" stroke-width="1"/></svg>
<div class="t" style="left:1096.5px;top:504.1px;font-size:15px;color:#393a42;">Status</div>
<svg class="ico" style="left:1570px;top:503.0px;stroke-width:1.5;stroke:#45464e" width="18" height="18" viewBox="0 0 18 18"><path d="M2.3 4.4h13.4M6.3 4.4a2.7 2.5 0 0 1 5.4 0M4.1 4.4v9.2a1.7 1.7 0 0 0 1.7 1.7h6.4a1.7 1.7 0 0 0 1.7-1.7V4.4"/></svg>
<div class="a" style="left:1048.5px;top:538.0px;width:231.5px;height:33.0px;background:#fff;border:1px solid #d2d4dc;border-radius:4px"></div>
<div class="t" style="left:1069px;top:546.5px;font-size:15px;color:#393a42;">is</div>
<svg class="ico" style="left:1255px;top:546.5px;stroke:#393a42;stroke-width:1.2" width="16" height="16" viewBox="0 0 16 16"><path d="M4.3 6.3L8 10l3.7-3.7"/></svg>
<div class="a" style="left:1289.5px;top:538.0px;width:302.0px;height:33.0px;background:#fff;border:1px solid #d2d4dc;border-radius:4px"></div>
<div class="a" style="left:1305.5px;top:542.5px;width:178.5px;height:24.5px;background:#cce5ff;border-radius:4px"></div>
<div class="a" style="left:1318px;top:549.0px;width:11px;height:11px;border-radius:50%;background:#a99dfa"></div>
<div class="t" style="left:1337px;top:547.3px;font-size:14.6px;color:#393a42;">Budget Approval</div>
<svg class="ico" style="left:1460px;top:549.0px;stroke-width:1.5" width="12" height="12" viewBox="0 0 12 12"><path d="M2.2 2.2l7.6 7.6M9.8 2.2l-7.6 7.6"/></svg>
<svg class="ico" style="left:1566.8px;top:546.5px;stroke:#393a42;stroke-width:1.2" width="16" height="16" viewBox="0 0 16 16"><path d="M4.3 6.3L8 10l3.7-3.7"/></svg>
<div class="t" style="left:1049px;top:587.5px;font-size:15px;color:#393a42;">Then</div>
<div class="a" style="left:1134px;top:580.5px;width:146px;height:33.5px;background:#fff;border:1px solid #d2d4dc;border-radius:4px"></div>
<svg style="left:1154px;top:586.3px" width="21" height="21" viewBox="0 0 21 21"><rect width="21" height="21" rx="4.5" fill="#f8c92e"/><g fill="#fde9a6" font-size="6.4" font-family="Liberation Sans" font-weight="bold"><text x="5.2" y="10.8">1</text><text x="8.6" y="13.6">2</text><text x="12.2" y="16.6">3</text></g></svg>
<div class="a" style="left:1185.5px;top:586.5px;width:66px;height:22px;overflow:hidden"><div class="t" style="left:0;top:2.6px;font-size:15.4px;color:#393a42">Estimatec</div></div>
<svg class="ico" style="left:1255px;top:589.0px;stroke:#393a42;stroke-width:1.2" width="16" height="16" viewBox="0 0 16 16"><path d="M4.3 6.3L8 10l3.7-3.7"/></svg>
<div class="a" style="left:1289.5px;top:580.5px;width:146.5px;height:33.5px;background:#fff;border:1px solid #d2d4dc;border-radius:4px"></div>
<div class="t" style="left:1309.5px;top:589.3px;font-size:14.6px;color:#393a42;">is required</div>
<svg class="ico" style="left:1411px;top:589.0px;stroke:#393a42;stroke-width:1.2" width="16" height="16" viewBox="0 0 16 16"><path d="M4.3 6.3L8 10l3.7-3.7"/></svg>
<div class="a" style="left:1444.5px;top:580.5px;width:147.0px;height:33.5px;background:#eeeff3;border:1px solid #e0e1e6;border-radius:4px"></div>
<div class="t" style="left:1455px;top:588.9px;font-size:15.3px;color:#9699a6;">Value</div>
<div class="t" style="left:1057.5px;top:641.0px;font-size:15px;color:#393a42;">+ New column</div>
<div class="a" style="left:1034.5px;top:693px;width:570.5px;height:192px;background:#fff;border:1px solid #dfe1e9;border-radius:8px"></div>
<div class="t" style="left:1048.5px;top:710.5px;font-size:15px;color:#393a42;">If</div>
<svg style="left:1066px;top:707.5px" width="22" height="22" viewBox="0 0 22 22"><rect x="0" y="0" width="22" height="22" rx="4.5" fill="#1dc77b"/><rect x="6" y="6.5" width="10" height="9" fill="#fff" rx=".5"/><path d="M6.5 9.5h9M6.5 12.5h9" stroke="#5fd9a0" stroke-width="1"/></svg>
<div class="t" style="left:1096.5px;top:710.5px;font-size:15px;color:#393a42;">Status</div>
<svg class="ico" style="left:1570px;top:709.5px;stroke-width:1.5;stroke:#45464e" width="18" height="18" viewBox="0 0 18 18"><path d="M2.3 4.4h13.4M6.3 4.4a2.7 2.5 0 0 1 5.4 0M4.1 4.4v9.2a1.7 1.7 0 0 0 1.7 1.7h6.4a1.7 1.7 0 0 0 1.7-1.7V4.4"/></svg>
<div class="a" style="left:1048.5px;top:744.5px;width:231.5px;height:33.0px;background:#fff;border:1px solid #d2d4dc;border-radius:4px"></div>
<div class="t" style="left:1069px;top:753.0px;font-size:15px;color:#393a42;">is</div>
<svg class="ico" style="left:1255px;top:753px;stroke:#393a42;stroke-width:1.2" width="16" height="16" viewBox="0 0 16 16"><path d="M4.3 6.3L8 10l3.7-3.7"/></svg>
<div class="a" style="left:1289.5px;top:744.5px;width:302.0px;height:33.0px;background:#fff;border:1px solid #d2d4dc;border-radius:4px"></div>
<div class="a" style="left:1305.5px;top:749px;width:92.5px;height:24.5px;background:#cce5ff;border-radius:4px"></div>
<div class="a" style="left:1318px;top:755.5px;width:11px;height:11px;border-radius:50%;background:#9cd326"></div>
<div class="t" style="left:1337px;top:753.8px;font-size:14.6px;color:#393a42;">Live</div>
<svg class="ico" style="left:1374px;top:755.5px;stroke-width:1.5" width="12" height="12" viewBox="0 0 12 12"><path d="M2.2 2.2l7.6 7.6M9.8 2.2l-7.6 7.6"/></svg>
<svg class="ico" style="left:1566.8px;top:753px;stroke:#393a42;stroke-width:1.2" width="16" height="16" viewBox="0 0 16 16"><path d="M4.3 6.3L8 10l3.7-3.7"/></svg>
<div class="t" style="left:1049px;top:794.0px;font-size:15px;color:#393a42;">Then</div>
<div class="a" style="left:1134px;top:787px;width:146px;height:33.5px;background:#fff;border:1px solid #d2d4dc;border-radius:4px"></div>
<svg style="left:1154px;top:792.8px" width="21" height="21" viewBox="0 0 21 21"><rect width="21" height="21" rx="4.5" fill="#f8c92e"/><path d="M5.7 6.2h9.6" stroke="#fff" stroke-width="2.1" fill="none"/><path d="M6.1 5.4v2.6M14.9 5.4v2.6" stroke="#fff" stroke-width="1.2" fill="none"/><path d="M10.5 6.2v9.2" stroke="#fff" stroke-width="2.1" fill="none"/><path d="M8.4 15.3h4.2" stroke="#fff" stroke-width="1.6" fill="none"/></svg>
<div class="a" style="left:1185.5px;top:793px;width:66px;height:22px;overflow:hidden"><div class="t" style="left:0;top:2.6px;font-size:15.4px;color:#393a42">Platform</div></div>
<svg class="ico" style="left:1255px;top:795.5px;stroke:#393a42;stroke-width:1.2" width="16" height="16" viewBox="0 0 16 16"><path d="M4.3 6.3L8 10l3.7-3.7"/></svg>
<div class="a" style="left:1289.5px;top:787px;width:146.5px;height:33.5px;background:#fff;border:1px solid #d2d4dc;border-radius:4px"></div>
<div class="t" style="left:1309.5px;top:795.8px;font-size:14.6px;color:#393a42;">is required</div>
<svg class="ico" style="left:1411px;top:795.5px;stroke:#393a42;stroke-width:1.2" width="16" height="16" viewBox="0 0 16 16"><path d="M4.3 6.3L8 10l3.7-3.7"/></svg>
<div class="a" style="left:1444.5px;top:787px;width:147.0px;height:33.5px;background:#eeeff3;border:1px solid #e0e1e6;border-radius:4px"></div>
<div class="t" style="left:1455px;top:795.4px;font-size:15.3px;color:#9699a6;">Value</div>
<div class="t" style="left:1057.5px;top:847.5px;font-size:15px;color:#393a42;">+ New column</div>
<div class="a" style="left:1000px;top:819.5px;width:639px;height:67.5px;background:#fdfdfe;border-top:1px solid #dcdee6;border-radius:0 0 10px 12px"></div>
<div class="t" style="left:1480px;top:848.1px;font-size:14.3px;color:#4f5058;">Remove all</div>
<div class="a" style="left:1569px;top:837.5px;width:49.5px;height:33.5px;background:#0073ea;border-radius:4px"></div>
<div class="t" style="left:1578px;top:848.0px;font-size:13.8px;color:#fff;">Save</div>
<svg style="left:1135px;top:862px" width="14" height="20" viewBox="0 0 14 20"><path d="M1 1v14.5l3.6-3.3 2.3 5.3 2.3-1-2.2-5.2h5z" fill="#111" stroke="#fff" stroke-width="1"/></svg>
<!-- /PANEL -->
</body></html>
